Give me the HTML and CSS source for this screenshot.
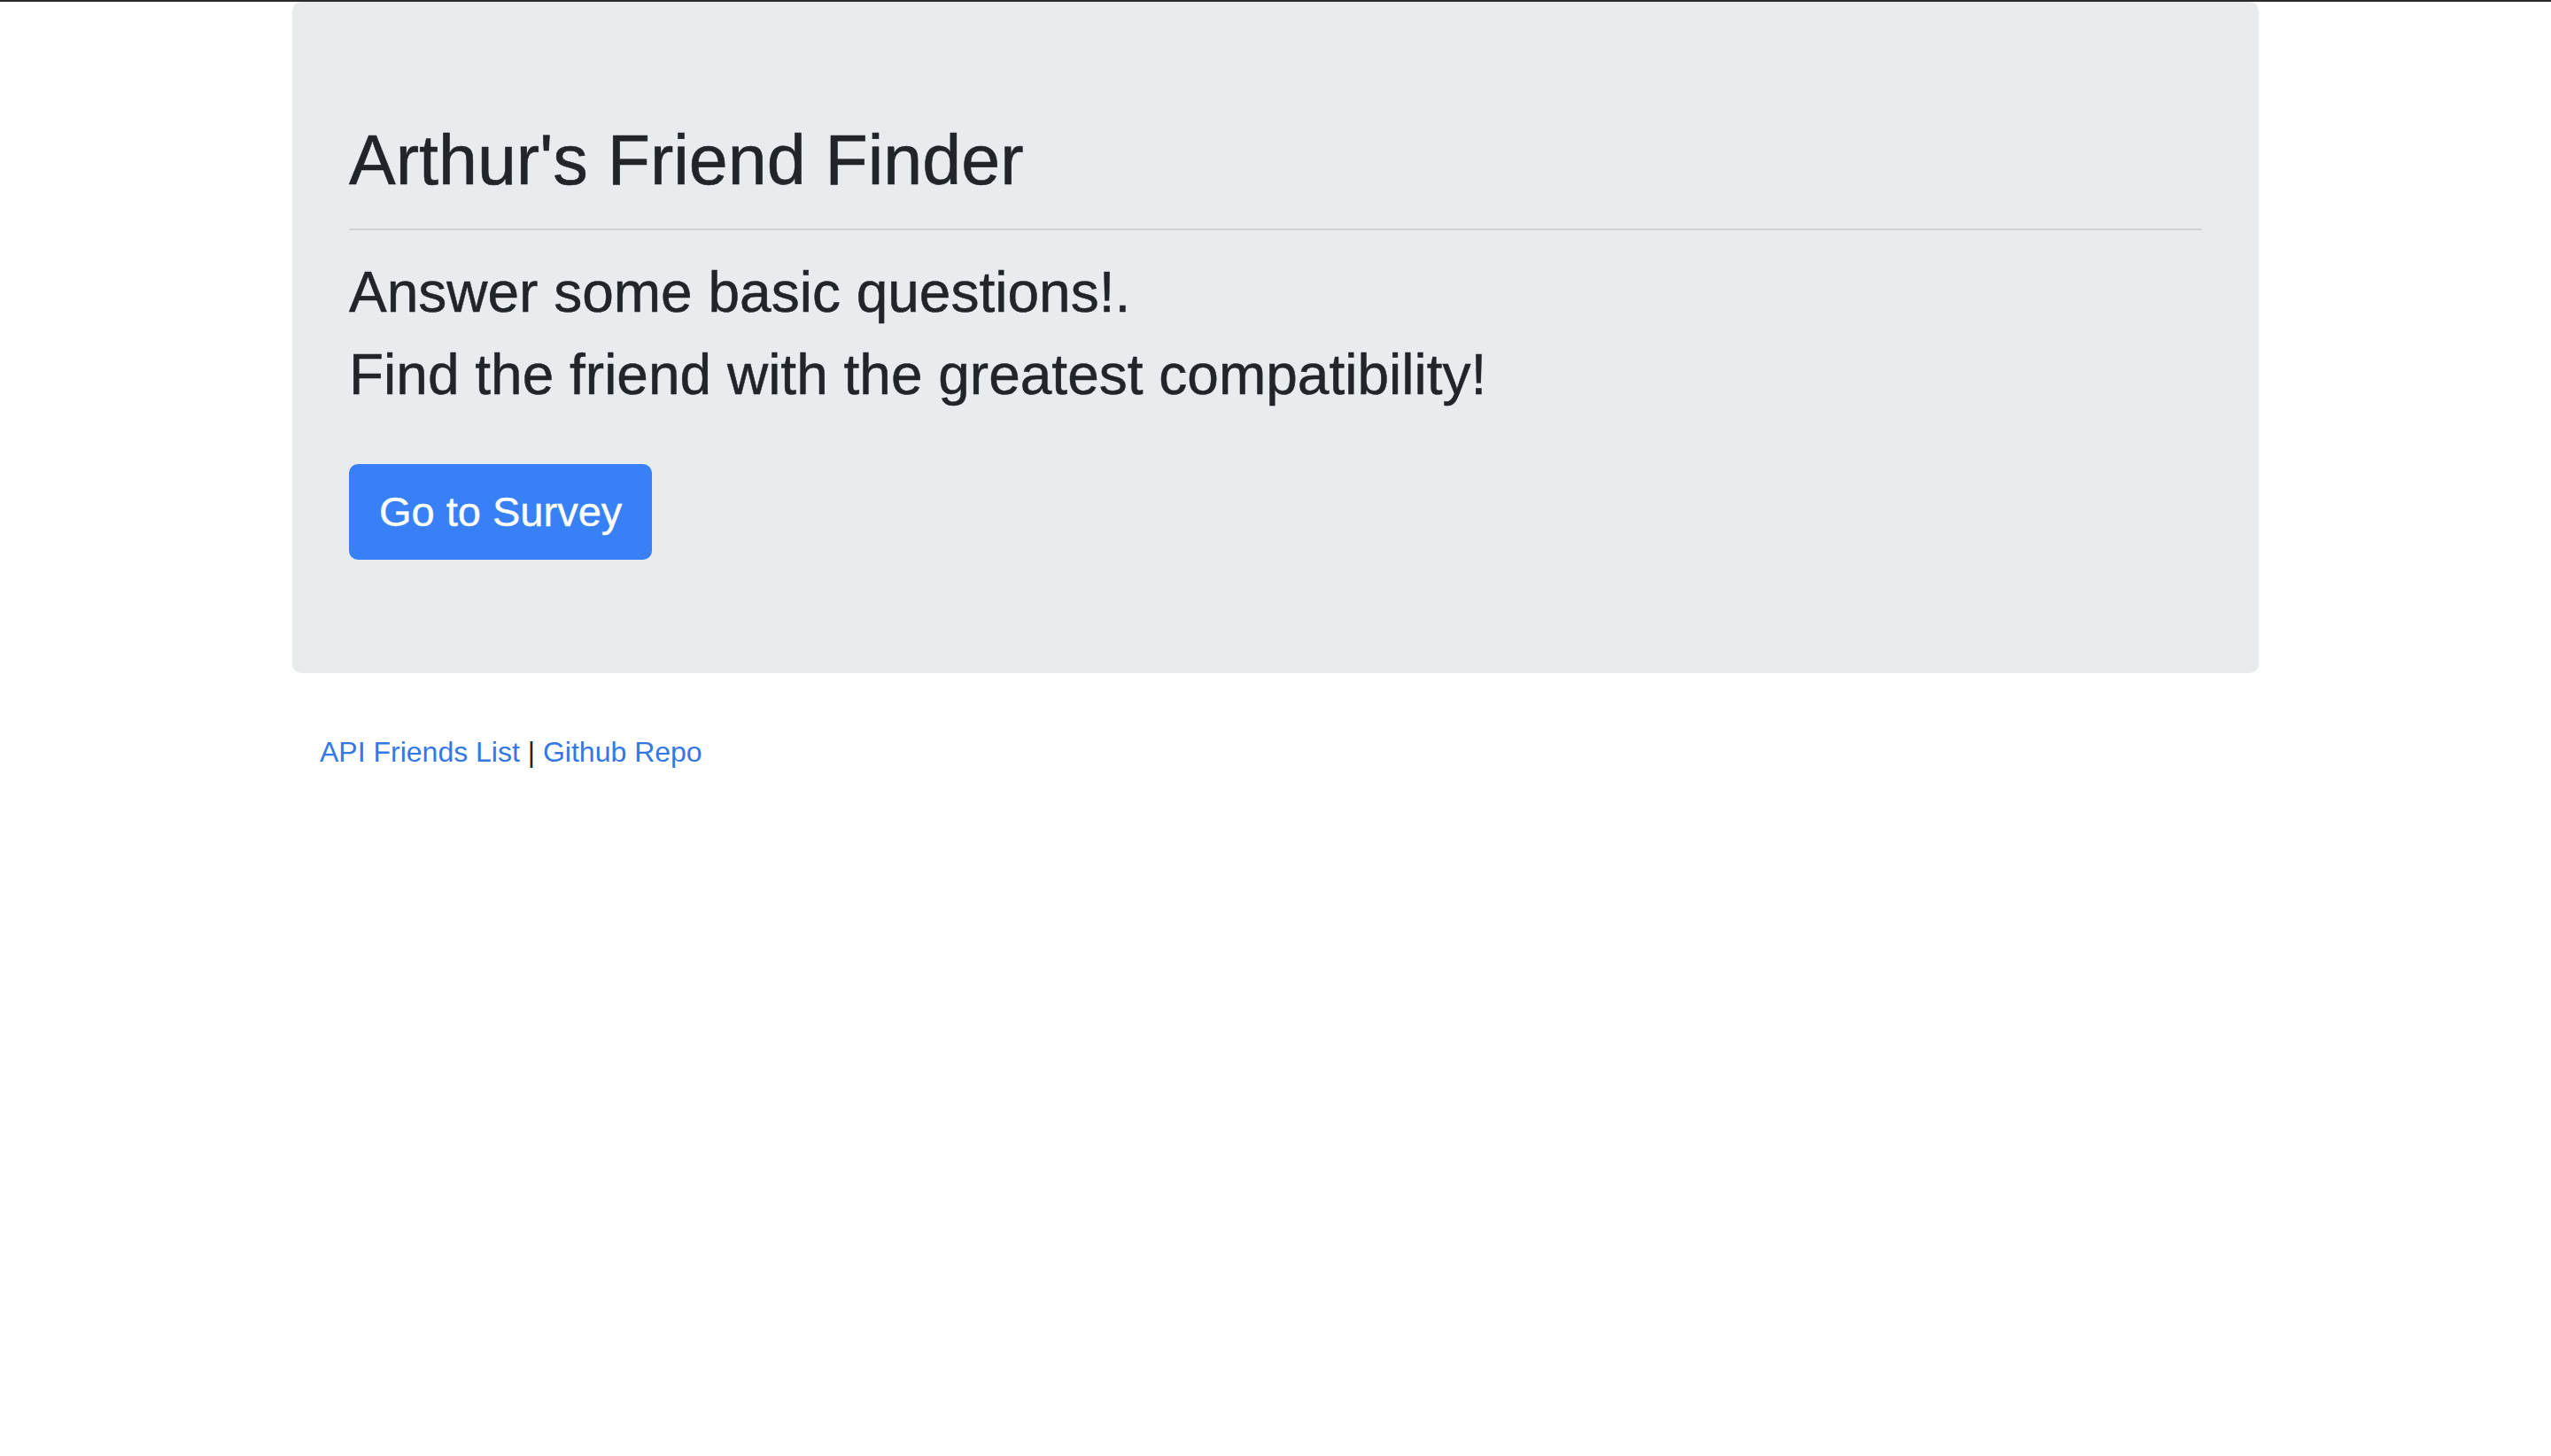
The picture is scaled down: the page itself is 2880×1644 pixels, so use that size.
FILE: index.html
```html
<!DOCTYPE html>
<html lang="en">
<head>
<meta charset="utf-8">
<title>Arthur's Friend Finder</title>
<link rel="stylesheet" href="styles.css">
</head>
<body>
<div class="topbar"></div>
<div class="container">
  <div class="jumbotron">
    <h1 class="title">Arthur's Friend Finder</h1>
    <hr class="divider">
    <h2 class="subtitle">Answer some basic questions!.</h2>
    <h2 class="subtitle">Find the friend with the greatest compatibility!</h2>
    <div class="actions">
      <a class="btn" href="#">Go to Survey</a>
    </div>
  </div>
  <div class="footer">
    <a class="link" href="#">API Friends List</a> | <a class="link" href="#">Github Repo</a>
  </div>
</div>
</body>
</html>
```
FILE: styles.css
```css
html, body {
  margin: 0;
  padding: 0;
  background: #ffffff;
}
body {
  font-family: "Liberation Sans", Arial, sans-serif;
  color: #212529;
}
.topbar {
  height: 2px;
  background: #2b2b2b;
}
.container {
  width: 2220px;
  margin: 0 auto;
  padding: 0 30px;
}
.jumbotron {
  background: #e9ecef;
  border-radius: 10px;
  padding: 128px 64px;
  margin-bottom: 65px;
}
.title {
  font-size: 79px;
  line-height: 96px;
  padding-top: 3px;
  font-weight: 400;
  margin: 0 0 16px;
  -webkit-text-stroke: 0.6px #212529;
}
.divider {
  margin: 29px 0 32px;
  border: 0;
  border-top: 2px solid rgba(0, 0, 0, 0.1);
  height: 0;
}
.subtitle {
  font-size: 64px;
  line-height: 76.8px;
  font-weight: 400;
  margin: 0 0 16px;
  -webkit-text-stroke: 0.5px #212529;
}
.actions {
  margin-top: 62px;
}
.btn {
  display: inline-block;
  font-size: 47px;
  line-height: 72px;
  padding: 16px 32px;
  border: 2px solid #3780f6;
  border-radius: 10px;
  background: #3780f6;
  color: #ffffff;
  text-decoration: none;
  -webkit-text-stroke: 0.4px #ffffff;
}
.footer {
  padding-left: 31px;
  font-size: 32px;
  line-height: 1.5;
}
.link {
  color: #3378e4;
  text-decoration: none;
}
```
